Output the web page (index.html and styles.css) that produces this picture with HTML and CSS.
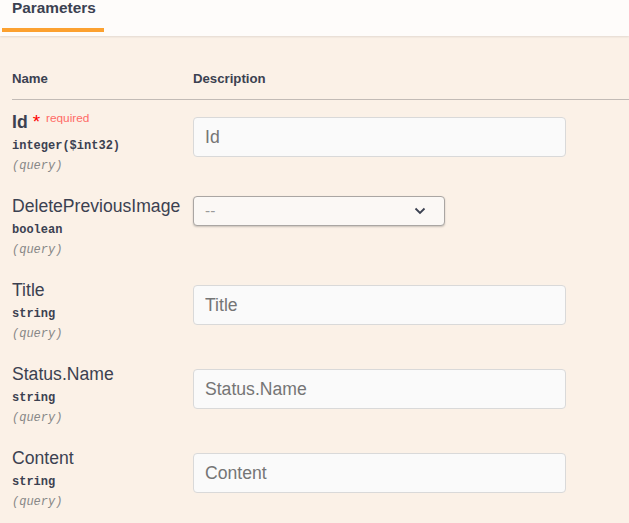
FILE: index.html
```html
<!DOCTYPE html>
<html>
<head>
<meta charset="utf-8">
<link rel="stylesheet" href="styles.css">
</head>
<body>
<div class="opblock">
  <div class="section-header">
    <div class="tab">Parameters</div>
  </div>
  <div class="params">
    <div class="thead">
      <div class="col-name">Name</div>
      <div class="col-desc">Description</div>
    </div>
    <div class="row">
      <div class="col-name">
        <div class="pname"><b>Id</b><span class="star">*</span><span class="req">required</span></div>
        <div class="ptype">integer<span class="fmt">($int32)</span></div>
        <div class="pin">(query)</div>
      </div>
      <div class="col-desc"><input class="field" type="text" placeholder="Id"></div>
    </div>
    <div class="row">
      <div class="col-name">
        <div class="pname">DeletePreviousImage</div>
        <div class="ptype">boolean</div>
        <div class="pin">(query)</div>
      </div>
      <div class="col-desc">
        <div class="select">
          <span class="sel-val">--</span>
          <svg class="chev" width="12" height="8" viewBox="0 0 12 8"><path d="M1.5 1.5 L6 6 L10.5 1.5" fill="none" stroke="#3b4151" stroke-width="1.8"/></svg>
        </div>
      </div>
    </div>
    <div class="row">
      <div class="col-name">
        <div class="pname">Title</div>
        <div class="ptype">string</div>
        <div class="pin">(query)</div>
      </div>
      <div class="col-desc"><input class="field" type="text" placeholder="Title"></div>
    </div>
    <div class="row">
      <div class="col-name">
        <div class="pname">Status.Name</div>
        <div class="ptype">string</div>
        <div class="pin">(query)</div>
      </div>
      <div class="col-desc"><input class="field" type="text" placeholder="Status.Name"></div>
    </div>
    <div class="row">
      <div class="col-name">
        <div class="pname">Content</div>
        <div class="ptype">string</div>
        <div class="pin">(query)</div>
      </div>
      <div class="col-desc"><input class="field" type="text" placeholder="Content"></div>
    </div>
  </div>
</div>
</body>
</html>
```
FILE: styles.css
```css
html, body {
  margin: 0;
  padding: 0;
}
body {
  background: #fbf1e7;
  font-family: "Liberation Sans", Arial, sans-serif;
  color: #3b4151;
  overflow: hidden;
}
.section-header {
  height: 36px;
  background: #fefcfa;
  box-shadow: 0 1px 2px rgba(0, 0, 0, 0.1);
  padding-left: 2px;
  display: flex;
}
.tab {
  font-size: 15.4px;
  font-weight: 700;
  line-height: 16px;
  padding: 0 8px 12px 10px;
  border-bottom: 4px solid #fca130;
  height: 16px;
}
.params {
  padding: 36px 0 0 12px;
}
.thead {
  display: flex;
  font-size: 13.2px;
  font-weight: 700;
  line-height: 14px;
  padding-bottom: 13px;
  border-bottom: 1px solid #c2bbb6;
}
.col-name {
  width: 181px;
  flex: none;
}
.col-desc {
  flex: 1;
}
.row {
  display: flex;
  padding: 12px 0 11px;
  height: 61px;
}
.pname {
  font-size: 17.6px;
  line-height: 20px;
  height: 20px;
  white-space: nowrap;
}
.pname b {
  font-weight: 700;
}
.star {
  color: #ff0000;
  padding-left: 5px;
  font-size: 19px;
}
.req {
  color: #ff6a66;
  font-size: 11.8px;
  position: relative;
  top: -6px;
  padding-left: 6px;
}
.ptype {
  font-family: "Liberation Mono", "Courier New", monospace;
  font-size: 12px;
  font-weight: 700;
  line-height: 14px;
  padding: 7px 0 6px;
}
.pin {
  font-family: "Liberation Mono", "Courier New", monospace;
  font-size: 12px;
  font-style: italic;
  color: #888888;
  line-height: 14px;
}
.field {
  display: block;
  box-sizing: border-box;
  width: 373px;
  height: 40px;
  margin: 5px 0 0;
  padding: 0 11px;
  border: 1px solid #d9d9d9;
  border-radius: 4px;
  background: #fafafa;
  font-family: "Liberation Sans", Arial, sans-serif;
  font-size: 17.6px;
  color: #3b4151;
  outline: none;
}
.field::placeholder {
  color: #757575;
}
.select {
  box-sizing: border-box;
  width: 252px;
  height: 30px;
  border: 1px solid #aaa6a3;
  border-radius: 4px;
  background: #fbf8f5;
  box-shadow: 0 1px 2px rgba(0, 0, 0, 0.2);
  display: flex;
  align-items: center;
  justify-content: space-between;
  padding: 0 18px 0 11px;
}
.sel-val {
  color: #9a9a9a;
  font-size: 15.4px;
}
.chev {
  display: block;
}
```
